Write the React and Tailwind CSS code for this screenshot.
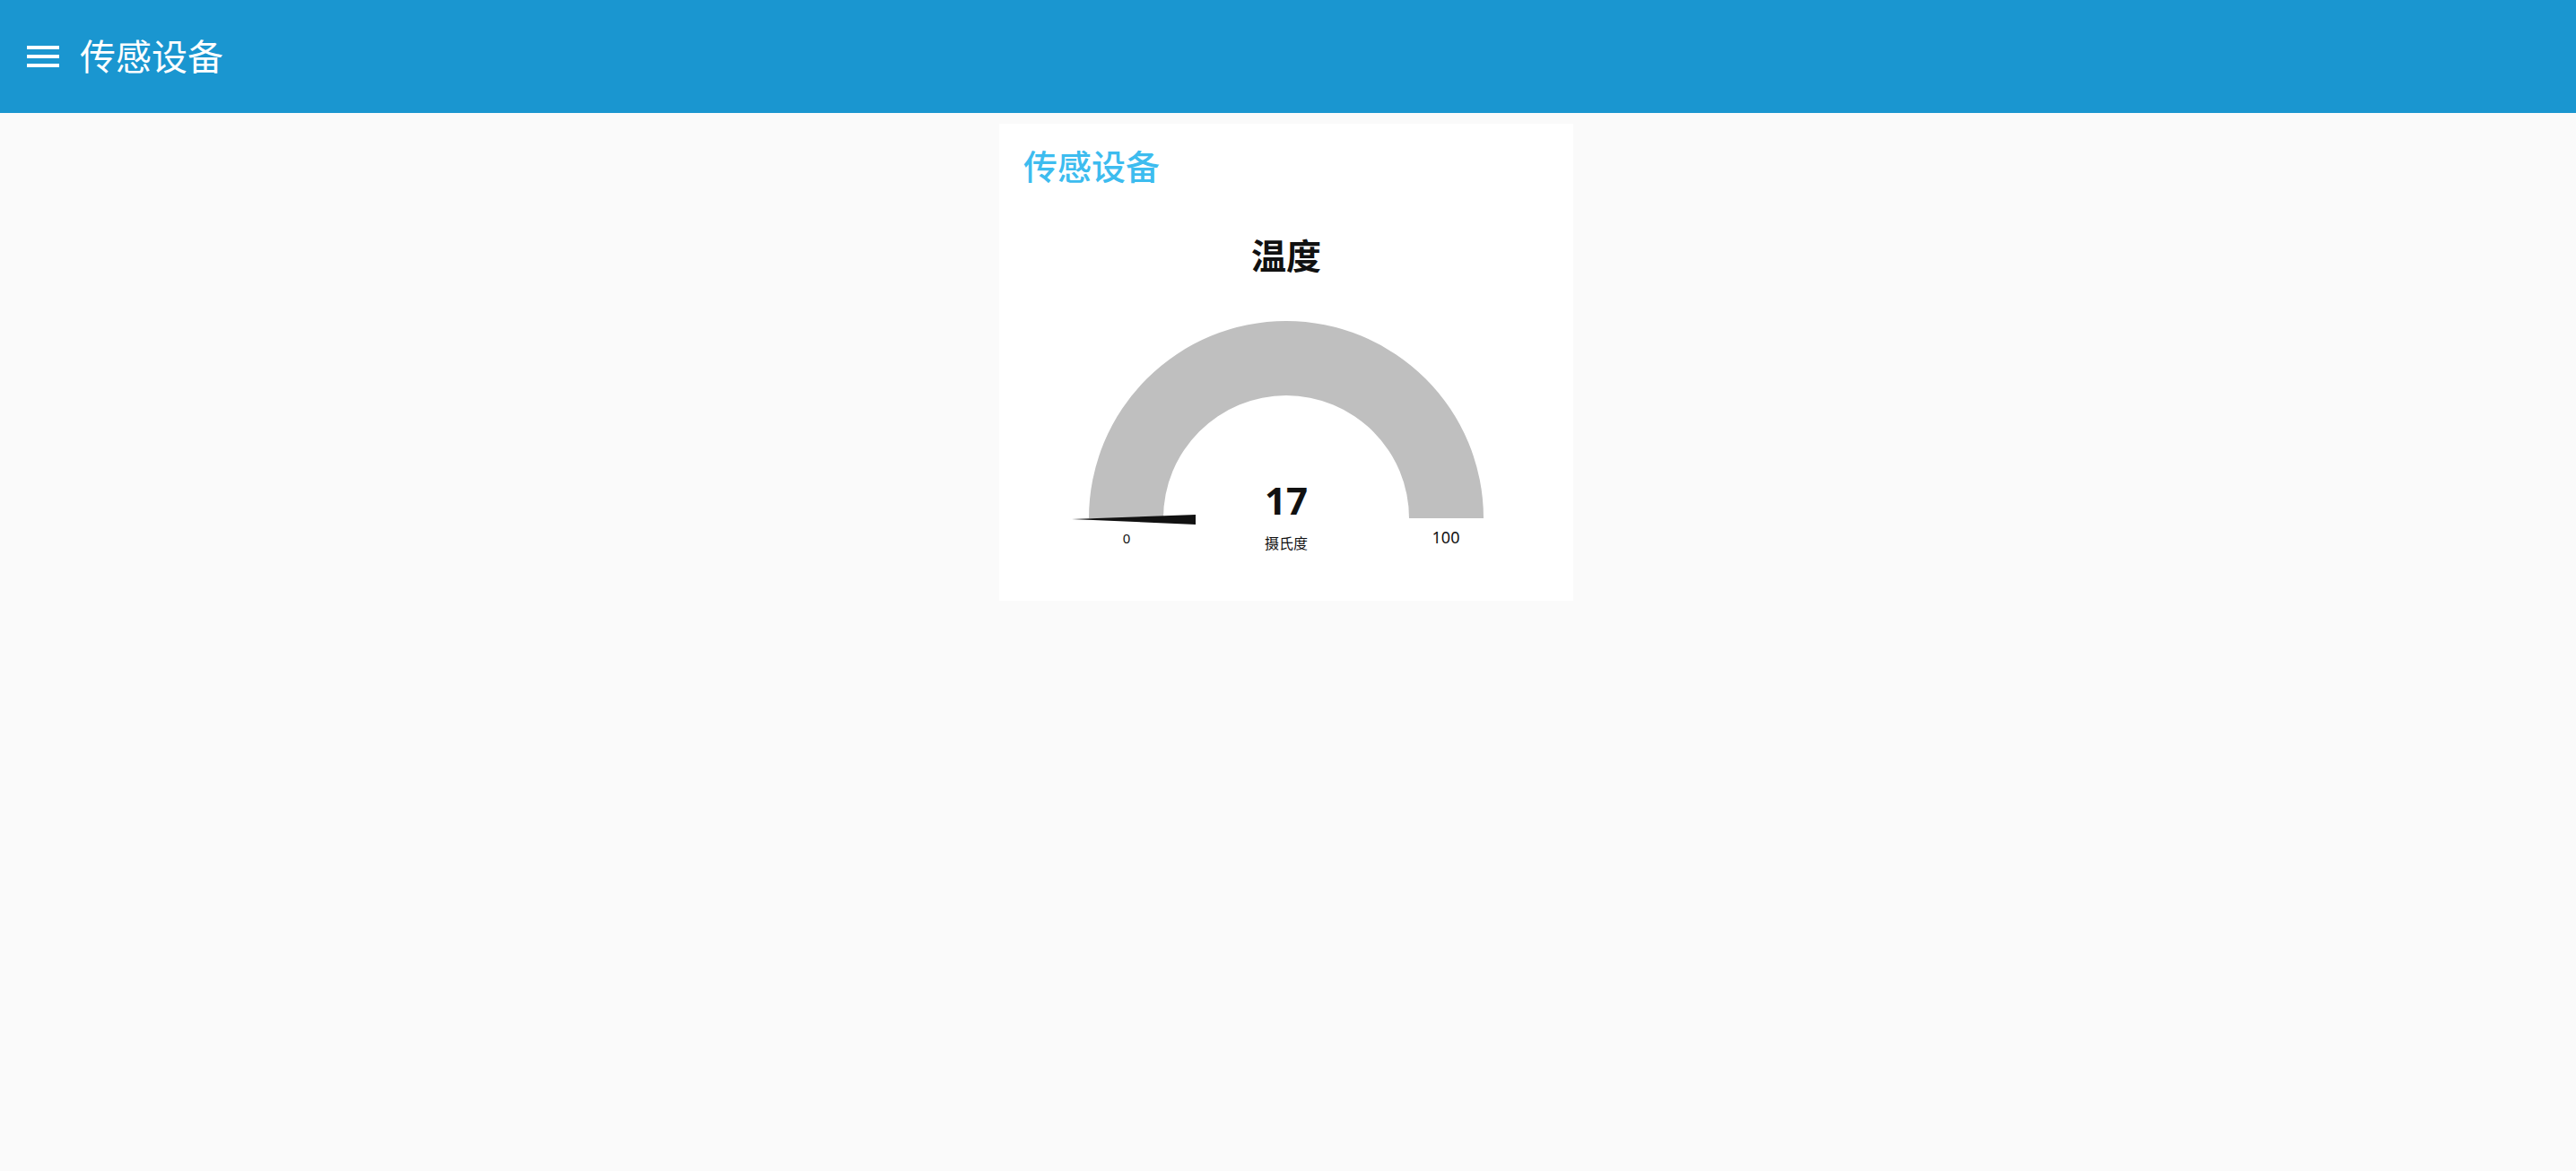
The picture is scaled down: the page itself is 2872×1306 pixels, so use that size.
import React from 'react';

const font = '"Noto Sans", "Noto Sans CJK SC", sans-serif';

function Gauge() {
  // center (320, 345), outer r 220, inner r 137
  return (
    <svg width="640" height="420" viewBox="0 0 640 420" className="block">
      <text x="320" y="67" textAnchor="middle" fontSize="39" fontWeight="700" fill="#111" style={{ fontFamily: font }}>
        温度
      </text>
      <path d="M 100 345 A 220 220 0 0 1 540 345 L 457 345 A 137 137 0 0 0 183 345 Z" fill="#bfbfbf" />
      <polygon points="81,346 219,341 219,352" fill="#111" />
      <text x="320" y="341" textAnchor="middle" fontSize="42" fontWeight="700" fill="#111" style={{ fontFamily: font }}>
        17
      </text>
      <text x="320" y="379" textAnchor="middle" fontSize="16" fill="#111" style={{ fontFamily: font }}>
        摄氏度
      </text>
      <text x="142" y="373" textAnchor="middle" fontSize="15" fill="#111" style={{ fontFamily: font }}>
        0
      </text>
      <text x="498" y="373" textAnchor="middle" fontSize="18" fill="#111" style={{ fontFamily: font }}>
        100
      </text>
    </svg>
  );
}

export default function App() {
  return (
    <div className="min-h-[1306px] bg-[#fafafa]" style={{ fontFamily: font }}>
      <header className="h-[126px] bg-[#1a96d0] flex items-center pl-[30px]">
        <button className="flex flex-col gap-[6px] w-[36px]">
          <span className="block h-[4px] w-full bg-white" />
          <span className="block h-[4px] w-full bg-white" />
          <span className="block h-[4px] w-full bg-white" />
        </button>
        <h1 className="ml-[23px] text-[40px] leading-none text-white font-normal">传感设备</h1>
      </header>

      <main className="flex justify-center pt-[12px] pr-[4px]">
        <div className="w-[640px] h-[532px] bg-white">
          <div className="pl-[27px] pt-[25px] text-[38px] leading-[1.2] font-medium text-[#3dbcef]">传感设备</div>
          <div className="mt-[24px]">
            <Gauge />
          </div>
        </div>
      </main>
    </div>
  );
}
